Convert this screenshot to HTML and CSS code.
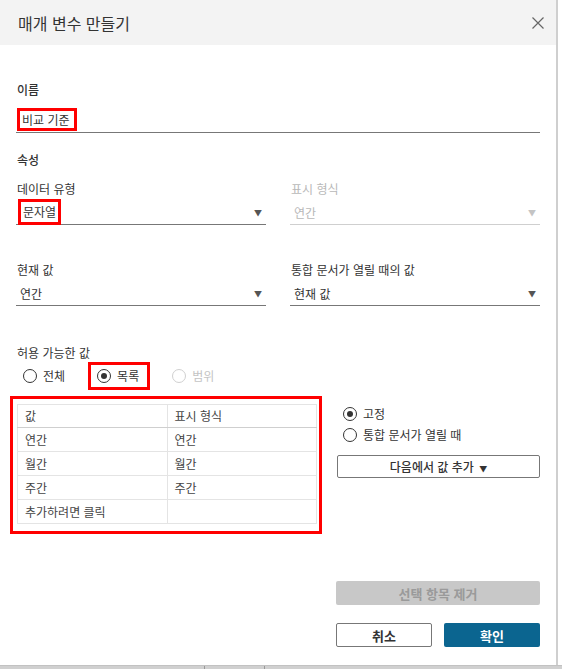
FILE: index.html
```html
<!DOCTYPE html>
<html lang="ko">

<head>
    <meta charset="UTF-8" />
    <meta name="viewport" content="width=device-width, initial-scale=1.0" />
    <title>매개 변수 만들기</title>
    <link rel="stylesheet" href="styles.css">
</head>

<body>
    <div class="dialog">
        <div class="dialog-header">
            <span class="dialog-title">매개 변수 만들기</span>
            <svg class="close-icon" width="12" height="12" viewBox="0 0 12 12">
                <path d="M0.5 0.5 L11.5 11.5 M11.5 0.5 L0.5 11.5" stroke="#666" stroke-width="1.2" fill="none" />
            </svg>
        </div>

        <div class="dialog-body">
            <div class="label strong first">이름</div>
            <div class="text-field"><span class="marked">비교 기준</span></div>

            <div class="label strong section">속성</div>
            <div class="field-row">
                <div class="field">
                    <div class="label">데이터 유형</div>
                    <div class="select"><span class="marked">문자열</span><span class="caret">▼</span></div>
                </div>
                <div class="field disabled">
                    <div class="label">표시 형식</div>
                    <div class="select"><span>연간</span><span class="caret">▼</span></div>
                </div>
            </div>

            <div class="field-row spaced">
                <div class="field">
                    <div class="label">현재 값</div>
                    <div class="select"><span>연간</span><span class="caret">▼</span></div>
                </div>
                <div class="field">
                    <div class="label">통합 문서가 열릴 때의 값</div>
                    <div class="select"><span>현재 값</span><span class="caret">▼</span></div>
                </div>
            </div>

            <div class="label allowed">허용 가능한 값</div>
            <div class="radio-row">
                <label class="radio"><span class="dot"></span>전체</label>
                <label class="radio checked marked-radio"><span class="dot"></span>목록</label>
                <label class="radio disabled"><span class="dot"></span>범위</label>
            </div>

            <div class="list-area">
                <div class="table-mark">
                    <table class="values">
                        <tr class="head"><td>값</td><td>표시 형식</td></tr>
                        <tr><td>연간</td><td>연간</td></tr>
                        <tr><td>월간</td><td>월간</td></tr>
                        <tr><td>주간</td><td>주간</td></tr>
                        <tr><td class="hint">추가하려면 클릭</td><td></td></tr>
                    </table>
                </div>
                <div class="list-side">
                    <label class="radio checked"><span class="dot"></span>고정</label>
                    <label class="radio"><span class="dot"></span>통합 문서가 열릴 때</label>
                    <button class="btn add-btn">다음에서 값 추가 <span class="small-caret">▼</span></button>
                </div>
            </div>

            <div class="footer">
                <button class="btn remove-btn">선택 항목 제거</button>
                <div class="footer-actions">
                    <button class="btn cancel-btn">취소</button>
                    <button class="btn ok-btn">확인</button>
                </div>
            </div>
        </div>
    </div>
    <div class="app-strip">
        <span class="tick t1"></span>
        <span class="tick t2"></span>
    </div>
</body>

</html>
```

FILE: styles.css
```css
body {
    margin: 0;
    background: #ffffff;
    font-family: "Noto Sans CJK KR", "Noto Sans", sans-serif;
    font-size: 12px;
    color: #333;
    width: 562px;
    height: 669px;
    overflow: hidden;
}

.dialog {
    width: 558px;
    height: 665px;
    box-sizing: border-box;
    border-right: 2px solid #cfcfcf;
    background: #fff;
    display: flex;
    flex-direction: column;
}

.dialog-header {
    height: 45px;
    flex-shrink: 0;
    background: #f3f3f3;
    display: flex;
    align-items: center;
    justify-content: space-between;
    padding: 0 12px 0 18px;
}

.dialog-title {
    font-size: 16px;
    color: #333;
}

.dialog-body {
    flex: 1;
    display: flex;
    flex-direction: column;
    padding: 0 16px 18px 16px;
}

.label {
    line-height: 18px;
    height: 18px;
    padding-left: 1px;
    white-space: nowrap;
}

.label.strong {
    font-weight: 500;
}

.label.first {
    margin-top: 36px;
}

.label.section {
    margin-top: 18px;
}

.text-field {
    border-bottom: 1px solid #777;
    padding-top: 6px;
    box-sizing: border-box;
    height: 28px;
    margin-top: 6px;
    line-height: 18px;
}

.marked {
    display: inline-block;
    border: 3px solid #f00;
    padding: 0 4px 0 2px;
    line-height: 17px;
}

.text-field .marked {
    margin-top: -3px;
    margin-left: 1px;
}

.field-row {
    display: flex;
    gap: 24px;
    margin-top: 11px;
}

.field-row.spaced {
    margin-top: 36px;
}

.field {
    flex: 1;
    display: flex;
    flex-direction: column;
}

.select {
    height: 27px;
    box-sizing: border-box;
    border-bottom: 1px solid #777;
    display: flex;
    align-items: center;
    justify-content: space-between;
    padding: 4px 4px 0 4px;
    line-height: 18px;
}

.select .marked {
    margin-left: -2px;
    margin-top: -2px;
    padding: 1px 2px 2px 2px;
}

.caret {
    font-size: 8px;
    color: #555;
}

.field.disabled .label,
.field.disabled .select {
    color: #b8b8b8;
}

.field.disabled .select {
    border-bottom-color: #cfcfcf;
}

.field.disabled .caret {
    color: #c4c4c4;
}

.label.allowed {
    margin-top: 38px;
}

.radio-row {
    display: flex;
    align-items: center;
    height: 28px;
    margin-left: 7px;
}

.radio {
    display: flex;
    align-items: center;
    gap: 6px;
    line-height: 18px;
    white-space: nowrap;
}

.radio-row .radio {
    margin-right: 38px;
}

.dot {
    width: 12px;
    height: 12px;
    border: 1px solid #333;
    border-radius: 50%;
    display: flex;
    align-items: center;
    justify-content: center;
    background: #fff;
}

.radio.checked .dot::after {
    content: "";
    width: 6px;
    height: 6px;
    border-radius: 50%;
    background: #333;
}

.radio.disabled {
    color: #c4c4c4;
}

.radio.disabled .dot {
    border-color: #d0d0d0;
}

.marked-radio {
    border: 3px solid #f00;
    padding: 2px 8px 2px 6px;
    margin-left: -15px;
}

.radio-row .marked-radio {
    margin-right: 22px;
}

.list-area {
    display: flex;
    margin-top: 6px;
    gap: 15px;
}

.table-mark {
    margin-left: -6px;
    width: 312px;
    box-sizing: border-box;
    border: 3px solid #f00;
    padding: 5px 2px 7px 4px;
}

.values {
    width: 300px;
    border-collapse: collapse;
    border: 1px solid #dcdcdc;
    color: #444;
}

.values td {
    border: 1px solid #e4e4e4;
    height: 23px;
    padding: 0 0 0 7px;
    width: 50%;
    line-height: 18px;
    vertical-align: middle;
}

.values tr.head td {
    height: 22px;
    border-bottom-color: #cfcfcf;
}

.list-side {
    flex: 1;
    display: flex;
    flex-direction: column;
    padding-top: 7px;
}

.list-side .radio {
    height: 21px;
    margin-left: 6px;
}

.btn {
    font-family: "Noto Sans CJK KR", "Noto Sans", sans-serif;
    font-size: 12px;
    border-radius: 2px;
    height: 24px;
    cursor: pointer;
    padding: 0;
}

.add-btn {
    margin-top: 10px;
    height: 23px;
    background: #fff;
    border: 1px solid #777;
    color: #333;
    font-weight: 500;
}

.small-caret {
    font-size: 8px;
    margin-left: 2px;
}

.footer {
    margin-top: auto;
    display: flex;
    flex-direction: column;
    align-items: flex-end;
}

.remove-btn {
    width: 204px;
    background: #c8c8c8;
    border: none;
    color: #9a9a9a;
    font-weight: 700;
    font-size: 13px;
}

.footer-actions {
    display: flex;
    gap: 12px;
    margin-top: 18px;
}

.cancel-btn {
    width: 96px;
    background: #fff;
    border: 1px solid #777;
    color: #333;
    font-size: 13px;
    font-weight: 700;
}

.ok-btn {
    width: 96px;
    background: #0b6590;
    border: none;
    color: #fff;
    font-size: 13px;
    font-weight: 700;
}

.app-strip {
    height: 4px;
    background: #d0d0d0;
    border-top: 1px solid #c2c2c2;
    width: 562px;
    display: flex;
}

.tick {
    width: 1px;
    height: 4px;
    background: #999;
}

.t1 {
    margin-left: 204px;
}

.t2 {
    margin-left: 59px;
}
```
